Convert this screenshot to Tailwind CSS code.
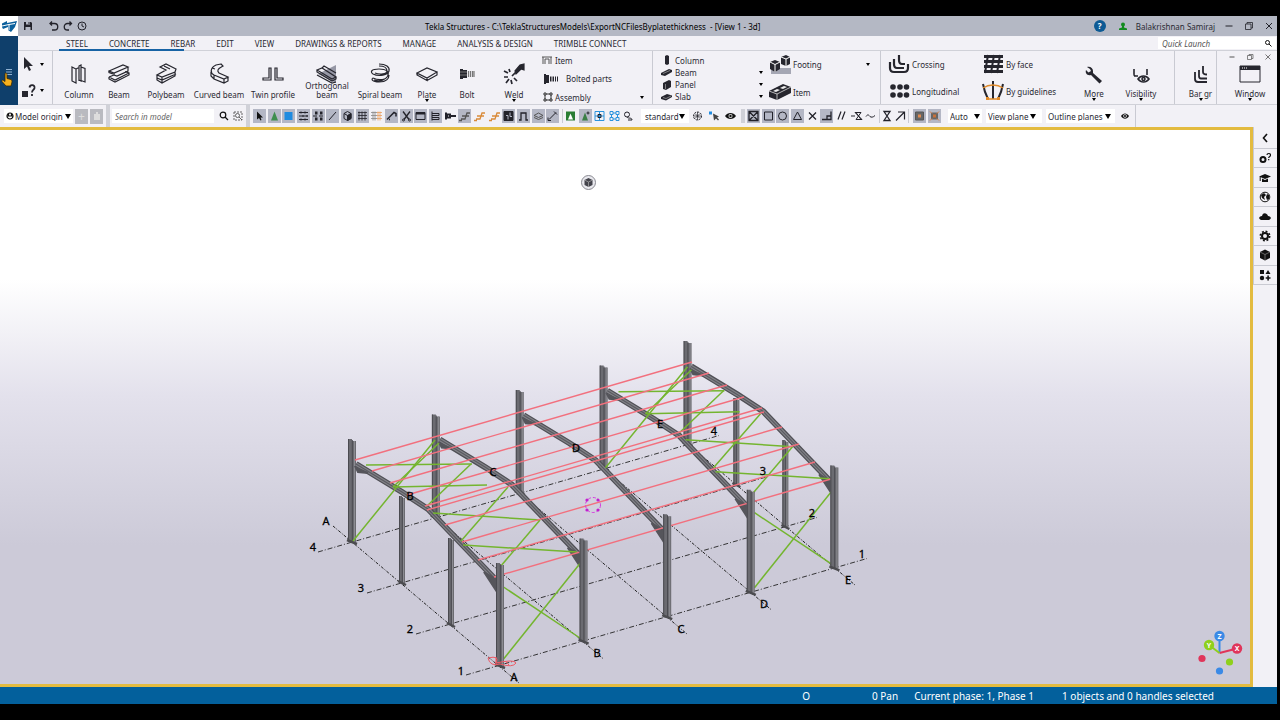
<!DOCTYPE html>
<html lang="en">
<head>
  <meta charset="UTF-8">
  <meta name="viewport" content="width=device-width, initial-scale=1.0">
  <title>Tekla Structures</title>
  <script src="https://cdn.jsdelivr.net/npm/@tailwindcss/browser@4"></script>
</head>
<body class="bg-black h-screen py-4 pr-[3px] flex flex-col overflow-hidden font-['Noto_Sans','Open_Sans',sans-serif] text-[8px] leading-[9px] text-[#2a2a33]">

<header class="flex bg-[#f2f1f6]">
  <!-- logo + file menu -->
  <div class="w-[18px] shrink-0 flex flex-col">
    <div class="h-5 bg-white flex items-center justify-center">
      <svg viewBox="0 0 16 14" class="w-4 h-3.5"><path d="M1 4.500 6 2v2l10-2-2 6-4 5-3-2V8L2 10 1 8z" fill="#0a5f9c"/><path d="M1 7 8 5.500V11M8 5.500l6-1" stroke="#fff" fill="none"/></svg>
    </div>
    <button aria-label="File menu" class="flex-1 bg-[#0f3f6b] relative flex justify-center pt-8">
      <svg viewBox="0 0 8 8" class="w-2 h-2" stroke="#8fb0d0"><path d="M1 1.500h6M1 4h6M1 6.500h6"/></svg>
      <svg viewBox="0 0 12 15" class="absolute left-px top-[36px] w-3 h-[15px]"><path d="M4 1.500c1-1 2 0 2 1v4l4 1c1 .5 1 1.500 1 2.500l-1 4H5L1 9.500c-.5-1 .5-2 1.500-1L4 9.500z" fill="#f6b01d" stroke="#3a2800" stroke-width=".8"/></svg>
    </button>
  </div>

  <div class="flex-1 min-w-0 flex flex-col">
    <!-- title bar -->
    <div class="h-5 bg-[#b4b8c4] flex items-center">
      <div class="w-[407px] shrink-0 flex items-center pl-1">
        <button aria-label="Save" class="mr-3.5"><svg viewBox="0 0 12 12" class="w-3 h-3"><path d="M2 2h7l1 1v7H2z" fill="#22222a"/><path d="M4 2v2.500h4V2M3.500 10V7h5v3" fill="#b4b8c4"/><path d="M6.500 2h1v2h-1z" fill="#22222a"/></svg></button>
        <button aria-label="Undo" class="mr-0.5"><svg viewBox="0 0 12 12" class="w-3 h-3" fill="none" stroke="#22222a" stroke-width="1.300"><path d="M4 1.500 2 3.500l2 2M2 3.500h4.500a3 3 0 0 1 0 6.500H4"/></svg></button>
        <button aria-label="Redo" class="mr-0.5"><svg viewBox="0 0 12 12" class="w-3 h-3" fill="none" stroke="#22222a" stroke-width="1.300"><path d="M7.500 1.500l2 2-2 2M9.500 3.500H5.500a3 3 0 0 0 0 6.500H7"/></svg></button>
        <button aria-label="History"><svg viewBox="0 0 12 12" class="w-3 h-3" fill="none" stroke="#22222a"><circle cx="6" cy="6" r="4"/><path d="M6 3.500V6l2 1"/></svg></button>
      </div>
      <h1 class="whitespace-nowrap text-black">Tekla Structures - C:\TeklaStructuresModels\ExportNCFilesByplatethickness&nbsp; - [View 1 - 3d]</h1>
      <div class="ml-auto flex items-center pr-0.5">
        <button aria-label="Help" class="w-3 h-3 rounded-full bg-[#0d5a94] text-white font-bold leading-3 mr-3">?</button>
        <svg viewBox="0 0 10 10" class="w-2.5 h-2.5 mr-2" fill="#128a1e"><circle cx="5" cy="3.500" r="2"/><path d="M4 5h2v1.500l3 1V9H1V7.500l3-1z"/></svg>
        <span class="mr-2 whitespace-nowrap">Balakrishnan Samiraj</span>
        <div class="flex gap-2 text-[#22222a]">
          <button aria-label="Minimize"><svg viewBox="0 0 12 12" class="w-3 h-3" fill="none" stroke="currentColor"><path d="M2.500 6h7"/></svg></button>
          <button aria-label="Restore"><svg viewBox="0 0 12 12" class="w-3 h-3" fill="none" stroke="currentColor" stroke-width=".8"><path d="M2.500 4h5.500v5.500H2.500zM4 4V2.500h5.500V8H8"/></svg></button>
          <button aria-label="Close"><svg viewBox="0 0 12 12" class="w-3 h-3" fill="none" stroke="currentColor"><path d="m3 3 6 6M9 3 3 9"/></svg></button>
        </div>
      </div>
    </div>

    <!-- ribbon tabs -->
    <div class="h-[15px] flex items-center border-b border-[#d0d1d8] relative">
      <nav class="flex gap-[21px] pl-12 whitespace-nowrap">
        <a href="#">STEEL</a><a href="#">CONCRETE</a><a href="#">REBAR</a><a href="#">EDIT</a><a href="#">VIEW</a><a href="#">DRAWINGS &amp; REPORTS</a><a href="#">MANAGE</a><a href="#">ANALYSIS &amp; DESIGN</a><a href="#">TRIMBLE CONNECT</a>
      </nav>
      <span class="absolute left-[41px] -bottom-px w-[125px] h-0.5 bg-[#1763a5]"></span>
      <label class="ml-auto mr-px w-[118px] h-3 bg-white flex items-center px-1">
        <input type="text" aria-label="Quick Launch" placeholder="Quick Launch" class="flex-1 min-w-0 italic outline-none placeholder:text-[#555]">
        <svg viewBox="0 0 8 8" class="w-2 h-2" fill="none" stroke="#111"><circle cx="3.500" cy="3.500" r="2"/><path d="m5 5 2.500 2.500"/></svg>
      </label>
    </div>

    <!-- ribbon -->
    <div class="h-[54px] flex border-b border-[#d0d1d8] whitespace-nowrap">
      <div class="w-[35px] shrink-0 border-r border-[#c9cad2] grid grid-rows-2 items-center pl-1">
        <button aria-label="Select" class="flex items-center gap-1"><svg viewBox="0 0 14 16" class="w-3.5 h-4" fill="#26262e"><path d="M2 1v12l3-2.500L7 15l2-1-2-4h4z"/></svg><svg viewBox="0 0 4 3" class="w-1 h-[3px]"><path d="M0 0h4L2 3z"/></svg></button>
        <button aria-label="Inquire" class="flex items-center gap-1"><svg viewBox="0 0 14 16" class="w-3.5 h-4"><path d="M0 8h6v6H0z" fill="#26262e"/><path d="M7.500 4.500C8 1 13 1.500 12.500 5c-.5 2-2.500 2-2.500 4.500M10 11v2" fill="none" stroke="#26262e" stroke-width="1.800"/></svg><svg viewBox="0 0 4 3" class="w-1 h-[3px]"><path d="M0 0h4L2 3z"/></svg></button>
      </div>

      <div id="steel_tools" class="flex shrink-0 pl-1.5"></div>

      <div class="w-[112px] shrink-0 border-r border-[#c9cad2] flex flex-col justify-between pb-0.5 pt-1">
        <button class="flex items-center gap-0.5"><svg viewBox="0 0 12 10" class="w-3 h-2.5" fill="none" stroke="#555"><path d="M1 2h10M2 2v7M4 9V4h4v5M10 2v7"/></svg>Item</button>
        <button class="flex items-center gap-2 pl-[3px]"><svg viewBox="0 0 14 10" class="w-3.5 h-2.5" fill="#26262e"><path d="M0 0h2v10H0zM2 1h3v8H2zM6 2.500h1.500v5H6zM8.500 2.500H10v5H8.500zM11 2.500h1v5h-1zM13 2.500h1v5h-1z"/></svg>Bolted parts</button>
        <button class="flex items-center gap-0.5 pl-0.5 pr-2"><svg viewBox="0 0 10 10" class="w-2.5 h-2.5" fill="none" stroke="#333"><path d="M1 1h2v2H1zM7 1h2v2H7zM1 7h2v2H1zM7 7h2v2H7zM3 2h4M3 8h4M2 3v4M8 3v4"/></svg>Assembly<svg viewBox="0 0 4 3" class="w-1 h-[3px] ml-auto"><path d="M0 0h4L2 3z"/></svg></button>
      </div>

      <!-- concrete parts -->
      <div class="w-[228px] shrink-0 border-r border-[#c9cad2] flex pl-2">
        <div class="w-[102px] flex flex-col justify-between pt-1 pb-0.5">
          <button class="flex items-center gap-0.5"><svg viewBox="0 0 12 10" class="w-3 h-2.5" fill="#26262e"><path d="m4 1 2-1 2 1v8l-2 1-2-1z"/></svg>Column</button>
          <button class="flex items-center gap-0.5"><svg viewBox="0 0 12 10" class="w-3 h-2.5" fill="#26262e"><path d="m0 6 8-4 3 1v2L4 9 0 8z"/><path d="m2 6.500 7-3" stroke="#bbb" stroke-width=".6"/></svg>Beam<svg viewBox="0 0 4 3" class="w-1 h-[3px] ml-auto"><path d="M0 0h4L2 3z"/></svg></button>
          <button class="flex items-center gap-0.5"><svg viewBox="0 0 12 10" class="w-3 h-2.5" fill="#26262e"><path d="m2 3 6-3 2 1v6L5 10l-3-1z"/><path d="M4.500 4v5" stroke="#bbb" stroke-width=".6"/></svg>Panel<svg viewBox="0 0 4 3" class="w-1 h-[3px] ml-auto"><path d="M0 0h4L2 3z"/></svg></button>
          <button class="flex items-center gap-0.5"><svg viewBox="0 0 12 10" class="w-3 h-2.5" fill="#26262e"><path d="m0 5 6-3 5 1.500V5L5 8.500 0 7z"/><path d="m2 5.500 3 1 5-2.500" stroke="#bbb" stroke-width=".6" fill="none"/></svg>Slab<svg viewBox="0 0 4 3" class="w-1 h-[3px] ml-auto"><path d="M0 0h4L2 3z"/></svg></button>
        </div>
        <div class="flex-1 flex flex-col justify-between pl-1.5 pr-[10px] py-[3px]">
          <button class="flex items-center gap-0.5"><svg viewBox="0 0 22 20" class="w-[22px] h-5"><path d="M2 14h20v6H2z" fill="#a5a7b4"/><path d="m1 8 5-2 5 2v7l-5 3-5-3zM12 3l5-2 4 2v7l-4 2-5-2z" fill="#26262e"/><path d="m1 8 5 2.500L11 8M6 10.500V18M12 3l5 2 4-2M17 5v7" stroke="#fff" fill="none"/></svg>Footing<svg viewBox="0 0 4 3" class="w-1 h-[3px] ml-auto"><path d="M0 0h4L2 3z"/></svg></button>
          <button class="flex items-center gap-0.5"><svg viewBox="0 0 22 18" class="w-[22px] h-[18px]"><path d="m0 8 14-7 8 3v6L8 17l-8-3z" fill="#26262e"/><path d="m0 8 8 3 14-7M8 11v6" stroke="#ddd" stroke-width=".8" fill="none"/><path d="m4 8 4-2 3 1-4 2zM11 5l4-2 3 1-4 2z" fill="#eee"/></svg>Item</button>
        </div>
      </div>

      <!-- rebar -->
      <div class="flex-1 min-w-0 border-r border-[#c9cad2] flex pl-[7px]">
        <div class="w-[94px] flex flex-col justify-between py-[3px]">
          <button class="flex items-center gap-0.5"><svg viewBox="0 0 22 20" class="w-[22px] h-5" fill="none" stroke="#26262e" stroke-width="2.200"><path d="M2 8v6c0 3 1 4 4 4h10c3 0 4-1 4-4v-4M6 5v5c0 3 1 4 3 4h7M11 1v5c0 3 1 4 3 4h3"/></svg>Crossing</button>
          <button class="flex items-center gap-0.5"><svg viewBox="0 0 22 20" class="w-[22px] h-5" fill="#26262e"><circle cx="5" cy="6" r="2.800"/><circle cx="12" cy="6" r="2.800"/><circle cx="18.500" cy="6" r="2.800"/><circle cx="5" cy="14" r="2.800"/><circle cx="12" cy="14" r="2.800"/><circle cx="18.500" cy="14" r="2.800"/></svg>Longitudinal</button>
        </div>
        <div class="w-[88px] flex flex-col justify-between py-[3px]">
          <button class="flex items-center gap-0.5"><svg viewBox="0 0 22 20" class="w-[22px] h-5" fill="none" stroke="#26262e" stroke-width="3"><path d="M2 2.500h19M2 7.500h19M2 12.500h19M2 17.500h19"/><path d="M6 1 3 19M12 1 9 19M18 1l-3 18" stroke-width="2"/></svg>By face</button>
          <button class="flex items-center gap-0.5"><svg viewBox="0 0 22 20" class="w-[22px] h-5" fill="none" stroke="#26262e" stroke-width="2"><path d="M1 3c1 6 3 11 5 15M11 0v18M21 3c-1 6-3 11-5 15"/><path d="M1 7C7 3 15 3 21 7M5 18h12" stroke="#e08a2a" stroke-width="1.400"/><path d="M4 16h3v3H4zM15 16h3v3h-3z" fill="#e08a2a" stroke="none"/></svg>By guidelines</button>
        </div>
        <button class="w-[48px] flex flex-col items-center pt-3.5"><svg viewBox="0 0 20 20" class="w-5 h-5" fill="#26262e"><path d="M3 2c3-1 6 1 6 4v2l9 8-2.500 2.500L7 10C3 11 1 8 2 5l2.500 2.500L7 6 6 4z"/></svg><span class="mt-1">More</span><svg viewBox="0 0 4 3" class="w-1 h-[3px]"><path d="M0 0h4L2 3z"/></svg></button>
        <button class="w-[46px] flex flex-col items-center pt-3.5"><svg viewBox="0 0 20 20" class="w-5 h-5" fill="none" stroke="#26262e" stroke-width="1.600"><path d="M3 4v5c0 2 0 2 4 2M3 11h4M16 4v6M7 14c3-4 8-4 11 0-3 4-8 4-11 0z"/><circle cx="12.500" cy="14" r="1.500"/></svg><span class="mt-1">Visibility</span><svg viewBox="0 0 4 3" class="w-1 h-[3px]"><path d="M0 0h4L2 3z"/></svg></button>
      </div>
      <button class="w-[42px] shrink-0 border-r border-[#c9cad2] flex flex-col items-center pt-3.5 pl-2.5"><svg viewBox="0 0 16 20" class="w-4 h-5" fill="none" stroke="#26262e" stroke-width="1.800"><path d="M2 7v7c0 2 1 3 3 3h9M6 5v6c0 2 1 2.500 2 2.500h6M10 1v6c0 2 1 2.500 4 2.500"/></svg><span class="mt-1">Bar gr</span><svg viewBox="0 0 4 3" class="w-1 h-[3px]"><path d="M0 0h4L2 3z"/></svg></button>
      <div class="w-[60px] shrink-0 flex flex-col items-center pl-1.5">
        <div class="flex gap-2.5 pt-0.5 text-[#555]">
          <button aria-label="Minimize view"><svg viewBox="0 0 8 8" class="w-2 h-2" stroke="currentColor"><path d="M1.500 4h5"/></svg></button>
          <button aria-label="Restore view"><svg viewBox="0 0 8 8" class="w-2 h-2" fill="none" stroke="currentColor" stroke-width=".7"><path d="M1.500 2.500h4v4h-4zM3 2.500v-1h4v4H5.500"/></svg></button>
          <button aria-label="Close view"><svg viewBox="0 0 8 8" class="w-2 h-2" stroke="currentColor" stroke-width=".8"><path d="m1.500 1.500 5 5M6.500 1.500l-5 5"/></svg></button>
        </div>
        <button class="flex flex-col items-center pt-1"><svg viewBox="0 0 22 18" class="w-[22px] h-[18px]" fill="none" stroke="#26262e"><path d="M1 1h20v16H1z"/><path d="M1 3h20" stroke-width="4"/><path d="M3 3h1M5 3h1M7 3h1" stroke="#fff"/></svg><span class="mt-1.5">Window</span><svg viewBox="0 0 4 3" class="w-1 h-[3px]"><path d="M0 0h4L2 3z"/></svg></button>
      </div>
    </div>
  </div>
</header>

<!-- selection and snapping toolbars -->
<div class="h-[22px] shrink-0 bg-[#f2f1f6] flex items-center whitespace-nowrap">
  <div class="w-[110px] h-full shrink-0 flex items-center gap-0.5 pl-1 border-r-4 border-[#d0d1d8]">
    <label class="w-[69px] h-3.5 bg-white flex items-center gap-px px-0.5">
      <svg viewBox="0 0 8 8" class="w-2 h-2 shrink-0" fill="none" stroke="#111" stroke-width="1.200"><circle cx="4" cy="4" r="3"/><path d="M1 4h6M2.500 1v3M5.500 1v3"/></svg>
      <select aria-label="Work plane" class="flex-1 min-w-0 appearance-none outline-none"><option>Model origin</option></select>
      <svg viewBox="0 0 6 5" class="w-1.5 h-[5px] shrink-0"><path d="M0 0h6L3 5z"/></svg>
    </label>
    <button aria-label="Add work plane" class="w-[13px] h-[15px] bg-[#b9bac0] text-[#ddd] text-[12px]">+</button>
    <button aria-label="Delete work plane" class="w-[13px] h-[15px] bg-[#b9bac0] flex items-center justify-center"><svg viewBox="0 0 8 8" class="w-2 h-2" fill="#ddd"><path d="M3 0h2v2h2v6H1V2h2z"/></svg></button>
  </div>
  <div class="w-[140px] h-full shrink-0 flex items-center pl-0.5 border-r-4 border-[#d0d1d8]">
    <input type="text" aria-label="Search in model" placeholder="Search in model" class="w-[102px] h-3.5 bg-white px-[3px] italic outline-none placeholder:text-[#666]">
    <button aria-label="Search" class="ml-1"><svg viewBox="0 0 12 12" class="w-3 h-3" fill="none" stroke="#111" stroke-width="1.200"><circle cx="5" cy="5" r="2.800"/><path d="m7 7 3 3"/></svg></button>
    <button aria-label="Search in selection" class="ml-0.5"><svg viewBox="0 0 12 12" class="w-3 h-3" fill="none" stroke="#555" stroke-width=".9"><path d="M2 2h8v8H2z" stroke-dasharray="2 1"/><circle cx="5.500" cy="5.500" r="2"/><path d="m7 7 3 3"/></svg></button>
  </div>
  <div id="select_switches" class="w-[308px] ml-[3px] shrink-0 grid grid-cols-[repeat(21,1fr)]"></div>
  <div id="select_extra" class="w-[75px] ml-px pl-px shrink-0 grid grid-cols-5 border-l border-[#c9cad2]"></div>
  <label class="w-[48px] ml-1 shrink-0 h-3.5 bg-white flex items-center pl-1 pr-1">
    <select aria-label="Selection filter" class="flex-1 min-w-0 appearance-none outline-none"><option>standard</option></select>
    <svg viewBox="0 0 6 5" class="w-1.5 h-[5px] shrink-0"><path d="M0 0h6L3 5z"/></svg>
  </label>
  <div id="filter_tools" class="w-[54px] ml-0.5 shrink-0 grid grid-cols-3 border-r-4 border-[#d0d1d8]"></div>
  <div id="snap_switches" class="w-[132px] ml-0.5 shrink-0 grid grid-cols-9"></div>
  <div id="snap_extra" class="w-[30px] mr-1 shrink-0 grid grid-cols-2 border-x border-[#c9cad2]"></div>
  <div id="drag_switches" class="w-[29px] shrink-0 grid grid-cols-2"></div>
  <div class="h-full flex items-center gap-1 pl-1.5 pr-1 border-r border-[#c9cad2]">
    <label class="w-[34px] h-3.5 bg-white flex items-center px-0.5">
      <select aria-label="Snap plane" class="flex-1 min-w-0 appearance-none outline-none"><option>Auto</option></select>
      <svg viewBox="0 0 6 5" class="w-1.5 h-[5px] shrink-0"><path d="M0 0h6L3 5z"/></svg>
    </label>
    <label class="w-[56px] h-3.5 bg-white flex items-center pl-0.5 pr-1.5">
      <select aria-label="Plane type" class="flex-1 min-w-0 appearance-none outline-none"><option>View plane</option></select>
      <svg viewBox="0 0 6 5" class="w-1.5 h-[5px] shrink-0"><path d="M0 0h6L3 5z"/></svg>
    </label>
    <label class="w-[69px] h-3.5 bg-white flex items-center pl-0.5 pr-1">
      <select aria-label="Outline planes" class="flex-1 min-w-0 appearance-none outline-none"><option>Outline planes</option></select>
      <svg viewBox="0 0 6 5" class="w-1.5 h-[5px] shrink-0"><path d="M0 0h6L3 5z"/></svg>
    </label>
    <button aria-label="Show planes" class="mx-px"><svg viewBox="0 0 10 10" class="w-2.5 h-2.5"><path d="M1 5c2-3.500 6-3.500 8 0-2 3.500-6 3.500-8 0z" fill="#111"/><circle cx="5" cy="5" r="1.800" fill="#f2f1f6"/><circle cx="5" cy="5" r="1"/></svg></button>
  </div>
</div>

<div class="flex-1 min-h-0 flex bg-[#f2f1f6]">
  <main class="flex-1 min-w-0 border-y-[3px] border-r-[3px] border-[#e3bb3f] bg-linear-to-b from-white from-27% via-[#e3e1ec] via-48% to-[#cccad8] to-75%">
    <svg id="view3d" viewBox="0 130 1250 554" class="w-full h-full" font-size="11" text-anchor="middle"></svg>
  </main>
  <aside id="side_pane" class="w-6 shrink-0 h-[158px] grid grid-rows-[22px] auto-rows-fr border-l border-[#c9cad2]"></aside>
</div>

<footer class="h-[17px] shrink-0 bg-[#03609c] text-white text-[10px] leading-4 flex items-center justify-end whitespace-nowrap pr-[63px]">
  <span class="mr-[62px]">O</span>
  <span class="mr-4">0 Pan</span>
  <span class="mr-[28px]">Current phase: 1, Phase 1</span>
  <span>1 objects and 0 handles selected</span>
</footer>

<script>
  const arrow = '<svg viewBox="0 0 4 3" class="w-1 h-[3px]"><path d="M0 0h4L2 3z"/></svg>';

  // ribbon: label, width class, has menu, drawing
  const steelTools = [
    ["Column", "w-10", false, '<path d="m4 4 4 2v14l-4-2zM8 6l3-1.500V18M11 3l2-1v16l-2-1zM13 4l4 1.500V19l-4-1.500"/>'],
    ["Beam", "w-10", false, '<path d="M1 8 15 2l5 2L6 10zM6 10v2l3 1 11-5V4M1 8v1.500L5 11M1 14l5-2M1 14v2l6 3 14-7v-2l-4-1.500M1 14l6 3 14-7"/>'],
    ["Polybeam", "w-[54px]", false, '<path d="m5 4 6-3 10 5-1 3L7 14l-5-2 9-5zM2 12v5l5 3 13-7V9M7 14v6M2 15l5 2 14-6M9 3l6 3"/>'],
    ["Curved beam", "w-[52px]", false, '<path d="M13 1 8 2C2 5 2 10 6 12l10 4 4-2-9-4C9 8 9 6 15 3zM3 9v4l3 3 10 4 4-2v-4M16 16v4M6 12v4M4 5l3 1"/>'],
    ["Twin profile", "w-14", false, '<path d="M7 5h2v12H1v-2h6zM13 5h2v10h6v2h-8z"/>'],
    ["Orthogonal<br>beam", "w-[52px]", false, '<path d="m2 11 18-9v18z" fill="#9697a5" stroke="none"/><path d="m1 7 5-2 14 9-4 2zM1 7v2l15 9 4-2v-2M1 12l15 8 4-1M6 5l2-2 12 7"/>'],
    ["Spiral beam", "w-[54px]", false, '<path d="M10 1c7 0 11 3 10 7s-10 6-16 3c-3-2-2-5 6-5 8 0 10 3 9 6-1 5-9 6-15 3M10 3c6 0 8 2 8 5s-7 4-12 2M4 15c-2 1-1 4 6 4 8 0 10-4 10-7M5 17c6 2 11 0 13-3"/>'],
    ["Plate", "w-10", true, '<path d="m1 10 10-5 10 4-10 6zM1 10v2l10 5.500v-3M11 17.500 21 12V9"/>'],
    ["Bolt", "w-10", false, '<path d="M4 6h3v10H4zM7 7h4v8H7z" fill="#26262e" stroke="none"/><path d="M12.500 8v6M14.500 8v6M16.500 8v6M18 8v6M4 9h7M4 12h7" stroke="#777"/>'],
    ["Weld", "w-[54px]", true, '<path d="m9 13 6-6M1 8l4 2M6 6l1 3M1 14h4M3 20l3-4M9 21l-1-4M14 18l-3-3" stroke-width="1.700"/><path d="m12 8 5-6 4-1v6l-3-1-5 5z" fill="#26262e"/>'],
  ];
  document.getElementById("steel_tools").innerHTML = steelTools.map(([label, width, menu, icon]) => `
    <button class="${width} flex flex-col items-center justify-end ${menu ? "pb-0.5" : "pb-[5px]"}">
      <svg viewBox="0 0 22 22" class="w-[22px] h-[22px] ${label.includes("<br>") ? "-mb-1" : "mb-[5px]"}" fill="none" stroke="#26262e" stroke-width="1.200">${icon}</svg>
      <span>${label}</span>${menu ? arrow : ""}
    </button>`).join('');

  const rebar = c => `<path d="M3 9.500h4l1-3h3M4 6.500h4l1-3h3M1 11h3" fill="none" stroke="${c}" stroke-width="1.300"/>`;
  const eye = '<path d="M1 6.500c2.500-4 8.500-4 11 0-2.500 4-8.500 4-11 0z" fill="#111"/><circle cx="6.500" cy="6.500" r="2" fill="#eee"/><circle cx="6.500" cy="6.500" r="1.200" fill="#111"/>';
  const pointer = '<path d="M4 2v8l2-1.500L7.500 11l1-.5L7.500 8H10z" fill="#111"/>';

  // toolbar switches: tooltip, pressed, drawing in a 13px box
  function switches(id, list) {
    document.getElementById(id).innerHTML = list.map(([title, pressed, icon]) => `
      <button title="${title}" aria-label="${title}" class="w-[13px] h-3.5 ${pressed ? "bg-[#b4b7c5]" : ""}">
        <svg viewBox="0 0 13 13" class="w-full h-full" fill="none" stroke="#22222a">${icon}</svg>
      </button>`).join('');
  }

  switches("select_switches", [
    ["Select all", true, `<g stroke="none">${pointer}</g>`],
    ["Select connections", true, '<path d="M6.500 2 10 11H3z" fill="#3e8e4e" stroke="none"/>'],
    ["Select parts", true, '<path d="M2.500 2.500h8v8h-8z" fill="#1f8be0" stroke="none"/>'],
    ["Select surfaces", true, '<path d="M2 3h9M2 6.500h9M2 10h9M4 2v2M8 2v2M6 5.500v2M10 5.500v2M4 9v2M8 9v2"/>'],
    ["Select points", true, '<path d="M3 2h2.500v3H3zM8 2h2.500v3H8zM3 8h2.500v3H3zM8 8h2.500v3H8z" fill="#22222a" stroke="none"/><path d="M1 6.500h4M7 6.500h4"/>'],
    ["Select grid line", true, '<path d="M3 10.500 10 2.500"/>'],
    ["Select grid", true, '<path d="m3 4 3.500-2L10 4v5l-3.500 2L3 9zM3 4l3.500 2"/><path d="m6.500 6 3.500-2v5l-3.500 2z" fill="#22222a"/>'],
    ["Select grids", true, '<path d="M2 3h9M2 6h9M2 9h9M3 2v9M6 2v9M9 2v9" stroke-width=".8"/>'],
    ["Select single grid lines", false, '<path d="M1 3h6M1 6h6M1 9h6M3 2v9M5 2v9" stroke="#888" stroke-width=".8"/><path d="M7 3h5M7 6h5M7 9h5M8 2v9M10 2v9" stroke="#e8a060" stroke-width=".8"/>'],
    ["Select welds", true, '<path d="m2 10 4-4M4 10h1M6 6l3-3 2 1v3" stroke-width="1.500"/>'],
    ["Select cuts", true, '<path d="m3 2 6 8M10 2 4 10" stroke-width="1.300"/><circle cx="3.500" cy="10.500" r="1"/><circle cx="9.500" cy="10.500" r="1"/>'],
    ["Select views", true, '<path d="M2 3h9v7H2z"/><path d="M2 4h9" stroke-width="2"/>'],
    ["Select fittings", true, '<path d="M3 2v9M3 4h7v2H3M3 8h7v2H3"/>'],
    ["Select bolts", false, '<path d="M2 3v7M3 5h3v3H3zM6 6.500h6" stroke-width="2"/>'],
    ["Select bars", true, rebar("#555")],
    ["Select single bars", false, rebar("#d98a3a")],
    ["Select bar groups", false, rebar("#d98a3a")],
    ["Select pours", true, '<path d="M2 2h9v9H2z" fill="#22222a"/><path d="M4 6h2v4M8 3v4h2" stroke="#b4b7c5"/>'],
    ["Select planes", true, '<path d="M2 10.500h2v-7h5v7h2" stroke-width="1.300"/>'],
    ["Select loads", true, '<path d="m2 6 4.500-2.500L11 6 6.500 8zM2 8l4.500 2L11 8" stroke="#555"/>'],
    ["Select distances", true, '<path d="m3 10 7-7M2 8v3h3M8 2l3 3"/>'],
  ]);
  switches("select_extra", [
    ["Select components", false, '<path d="M2 2h9v9H2z" fill="#2a7d34" stroke="none"/><path d="m4 10 2.500-6L9 10z" fill="#fff" stroke="none"/>'],
    ["Select objects in components", true, '<path d="M6 3 9 11H3z" fill="#3a7f46" stroke="none"/><path d="M9 2v3M7.500 3.500h3"/>'],
    ["Select assemblies", false, '<path d="M2 2h9v9H2zM2 6.500h9M6.500 2v9" stroke="#2b93dd"/><path d="M5 5h3v3H5z" fill="#2b93dd"/>'],
    ["Select objects in assemblies", false, '<path d="M2 2h3v3H2zM8 2h3v3H8zM2 8h3v3H2zM8 8h3v3H8zM5 3.500h3M5 9.500h3M3.500 5v3M9.500 5v3" stroke="#2b93dd"/>'],
    ["Select tasks", false, '<circle cx="5" cy="5" r="2.500"/><path d="M5 7.500c1 2 5 0 5 3H6"/>'],
  ]);
  switches("filter_tools", [
    ["Selection filter settings", false, '<circle cx="6.500" cy="6.500" r="4" stroke-dasharray="2 1"/><path d="m4 4 5 5M9 4 4 9M6.500 2.500v8M2.500 6.500h8" stroke-width=".7"/>'],
    ["Direct modification", false, '<path d="M1 2h3v3H1z" fill="#1f8be0" stroke="none"/><path d="m5 4 1 7 2-2 2 2 1-1-2-2 2-1z" fill="#444" stroke="none"/>'],
    ["Show handles", false, `<g stroke="none">${eye}</g>`],
  ]);
  switches("snap_switches", [
    ["Snap to points", true, '<path d="M2 2h9v9H2zM2 2l9 9M11 2l-9 9" stroke-width="1.300"/>'],
    ["Snap to end points", true, '<path d="M2.500 2.500h8v8h-8z"/>'],
    ["Snap to center", true, '<circle cx="6.500" cy="6.500" r="4"/>'],
    ["Snap to mid points", true, '<path d="M6.500 2.500 10.500 10h-8z"/>'],
    ["Snap to intersection", false, '<path d="m3 3 7 7M10 3l-7 7" stroke-width="1.300"/>'],
    ["Snap perpendicular", true, '<path d="M2 10h9V2M7 10V6.500h4" stroke-width="1.300"/>'],
    ["Snap to extension", false, '<path d="m3 10 3-8M7 10l3-8" stroke-width="1.200"/>'],
    ["Snap to any position", false, '<path d="M1 6.500h4M5 3h6L6 10h6zM6 3l5 7"/>'],
    ["Snap to nearest", false, '<path d="M2 7c2-3 3-1 4 0s3 1 5-1"/>'],
  ]);
  switches("snap_extra", [
    ["Snap to lines", false, '<path d="M4 2h6L4 11h6zM4 2l6 9" stroke-width="1.300"/>'],
    ["Snap to dimensions", false, '<path d="m2 11 8-8M4 2.500h6.500V10" stroke-width="1.200"/>'],
  ]);
  switches("drag_switches", [
    ["Snap to geometry", true, '<path d="M2.500 2.500h8v8h-8z" fill="#666" stroke="#555"/><path d="M5 5h3v3H5z" fill="#e08a50" stroke="none"/>'],
    ["Snap to reference", true, '<path d="M3.500 3.500h6v6h-6z" fill="#666" stroke="#666"/><path d="m2 2 2 2M11 2 9 4M2 11l2-2M11 11 9 9" stroke="#e07a3a"/><path d="M5 5h3v3H5z" fill="#c8703a" stroke="none"/>'],
  ]);

  const sideButtons = [
    ["Collapse", '<path d="M8 2 4.500 6 8 10" fill="none" stroke="#111" stroke-width="1.600"/>'],
    ["Properties", '<circle cx="4" cy="7.500" r="2.500" fill="none" stroke="#111" stroke-width="2"/><path d="M8 3c0-2 3.500-2 3.500 0S9.700 4.500 9.700 6M9.700 7v1.300" fill="none" stroke="#111" stroke-width="1.200"/>'],
    ["Learning", '<path d="M0 4.500 6 2l6 2.500L6 7zM3 6.500 6 8l3-1.500V10H3z"/><path d="M1.200 5v4" stroke="#111"/>'],
    ["Online", '<circle cx="6" cy="6" r="4.800" fill="none" stroke="#111"/><path d="m2 4 3-2 2 2-2 2 1 3-3-2zM8 3l2 1v4L8 9 7 6z"/>'],
    ["Cloud", '<path d="M2 10c-3-1-2-4 1-4 1-4 5-3 6 0 3 0 4 3 1 4z"/>'],
    ["Settings", '<circle cx="6" cy="6" r="3" fill="none" stroke="#111" stroke-width="2"/><circle cx="6" cy="6" r="4.700" fill="none" stroke="#111" stroke-width="1.600" stroke-dasharray="1.900 1.790"/>'],
    ["Applications", '<path d="m6 .5 5 2.500v6l-5 2.500L1 9V3z"/><path d="m1 3 5 2.500L11 3M6 5.500v6" fill="none" stroke="#888" stroke-width=".7"/>'],
    ["Components", '<path d="M1 1h4v4H1zM9 1l2.500 4h-5zM8.300 6.500h1.600v1.700h1.600v1.600H9.900v1.700H8.300V9.800H6.700V8.200h1.600z"/><circle cx="3" cy="9" r="2.200"/>'],
  ];
  document.getElementById("side_pane").innerHTML = sideButtons.map(([label, icon]) => `
    <button aria-label="${label}" class="flex items-center justify-center border-b border-[#c9cad2] pr-px">
      <svg viewBox="0 0 12 12" class="w-3 h-3" fill="#111">${icon}</svg>
    </button>`).join('');

  // 3D view: frames A-E repeat along one screen vector
  const step = [84.2, -24.5];
  const line = (x1, y1, x2, y2, attrs) => `<path d="M${x1} ${y1} ${x2} ${y2}" fill="none" ${attrs}/>`;
  const dash = 'stroke="#222" stroke-width=".9" stroke-dasharray="5 2 1 2"';
  const green = 'stroke="#74b52f" stroke-width="1.500"';
  const red = 'stroke="#f2707e" stroke-width="1.400"';

  function column(x, top, base, wide) {
    const w = wide ? 4 : 3;
    return `<path d="M${x - w} ${top}h${w}v2h${w}V${base}h-${2 * w}z" fill="#6b6b71"/>
      <path d="M${x - w + .5} ${top}V${base}M${x + .3} ${top + 1}V${base}" stroke="#4a4a50"/>
      <path d="M${x + w - 1.500} ${top + 2}V${base}" stroke="#8c8c92"/>
      <path d="M${x - w - 1} ${base - 2}l${2 * w + 2} 4" stroke="#4b4b4f" stroke-width="2.500"/>`;
  }

  function rafter(dx, dy) {
    const d = `M${356 + dx} ${464 + dy}L${402 + dx} ${492 + dy} ${428 + dx} ${509 + dy} ${497 + dx} ${581 + dy}`;
    return `<g fill="none"><path d="${d}" stroke="#505056" stroke-width="6"/><path d="${d}" stroke="#828288" stroke-width="3.500"/><path d="${d}" stroke="#5a5a60" stroke-width="1.200"/></g>
      <path d="M${356 + dx} ${468 + dy}l12 5-10-1zM${484 + dx} ${572 + dy}l13 20v-12z" fill="#55555b" stroke="#55555b" stroke-width="2"/>`;
  }

  // braced bay, placed at A-B and again at D-E
  const braces = [[366, 465, 472, 464], [393, 487, 487, 485], [353, 541, 435, 440], [393, 487, 439, 443], [427, 506, 471, 464],
    [433, 513, 540, 520], [461, 541, 508, 487], [463, 545, 577, 552], [500, 567, 540, 520], [502, 586, 583, 640], [502, 661, 582, 561]];
  const purlins = [[355, 460], [372, 471], [390, 483], [407, 495], [425, 506], [427, 510], [445, 525], [462, 542], [478, 560], [494, 577]];

  let scene = "";
  [[318, 552], [367, 593], [416, 634], [466, 675]].forEach(([x, y]) => scene += line(x, y, x + 401, y - 116.500, dash));
  for (let i = 0; i < 5; i++) {
    scene += line(333 + i * 84, 526 - i * 24.500, 519 + i * 84, 683 - i * 24.500, 'stroke="#222" stroke-width="1" stroke-dasharray="3 1.500 1 1.500"');
  }
  for (let i = 4; i >= 0; i--) {
    const dx = i * step[0], dy = i * step[1];
    scene += column(352 + dx - i * .3, 439 + dy, 542 + dy, true);
    if (i === 0 || i === 4) {
      scene += column(402 + dx - i * .6, 496 + dy, 583 + dy) + column(451 + dx - i * .6, 538 + dy, 625 + dy);
    }
  }
  for (let i = 4; i >= 0; i--) scene += rafter(i * 83.800, i * -24.400);
  [[0, 0], [252.500, -73.300]].forEach(([dx, dy]) => braces.forEach(([a, b, c, d]) => scene += line(a + dx, b + dy, c + dx, d + dy, green)));
  purlins.forEach(([x, y]) => scene += line(x, y, x + 337, y - 98, red));
  for (let i = 4; i >= 0; i--) scene += column(500 + i * 83.600, 563 + i * -24.400, 666 + i * -24.400, true);

  // work plane mark at the origin
  scene += '<path d="M488 658q12-3 8 5 18-4 20 0-3 5-16 1-10 3-12-6zM496 657v8M505 661l4 4" fill="none" stroke="#ee5a66"/>';

  const labels = [["A", 326, 525], ["4", 313, 551], ["3", 361, 592], ["2", 410, 633], ["1", 461, 675], ["A", 514, 681], ["B", 597, 657],
    ["C", 681, 633], ["D", 764, 608], ["E", 848, 584], ["B", 410, 500], ["C", 493, 476], ["D", 576, 452], ["E", 660, 428],
    ["4", 714, 435], ["3", 763, 475], ["2", 812, 517], ["1", 862, 558]];
  labels.forEach(([t, x, y]) => scene += `<text x="${x}" y="${y}" fill="#000" stroke="#000" stroke-width=".3">${t}</text>`);

  // rotation centre and view cube button
  scene += '<circle cx="593" cy="505" r="7.500" fill="none" stroke="#d63adf" stroke-dasharray="3 2"/>';
  [[587, 500], [598, 500], [587, 510], [598, 510]].forEach(([x, y]) => scene += `<circle cx="${x}" cy="${y}" r="1.600" fill="#c21fd0"/>`);
  scene += '<circle cx="588.500" cy="182.500" r="7" fill="#e9e9ee" stroke="#8a8a92"/><path d="m588.500 178 4 2v5l-4 2-4-2v-5z" fill="#44444c"/><path d="m584.500 180 4 2 4-2M588.500 182v5" fill="none" stroke="#aaa" stroke-width=".7"/>';

  // axis gizmo
  scene += line(1219.500, 653, 1219.500, 636, 'stroke="#3b8ae6" stroke-width="2"') + line(1219.500, 653, 1237, 648.500, 'stroke="#e0355a" stroke-width="2"') + line(1219.500, 653, 1209, 645, 'stroke="#8fd01c" stroke-width="2"');
  [["Z", 1219.500, 636, "#3b8ae6"], ["X", 1237, 648.500, "#e0355a"], ["Y", 1209, 645, "#8fd01c"]].forEach(([t, x, y, c]) =>
    scene += `<circle cx="${x}" cy="${y}" r="5.200" fill="${c}"/><text x="${x}" y="${y + 2.500}" font-size="7" font-weight="bold" fill="#fff">${t}</text>`);
  [[1202, 658.500, "#e0355a"], [1229.500, 662, "#8fd01c"], [1219.500, 671, "#3b8ae6"]].forEach(([x, y, c]) => scene += `<circle cx="${x}" cy="${y}" r="3.600" fill="${c}"/>`);

  document.getElementById("view3d").innerHTML = scene;
</script>
</body>
</html>
